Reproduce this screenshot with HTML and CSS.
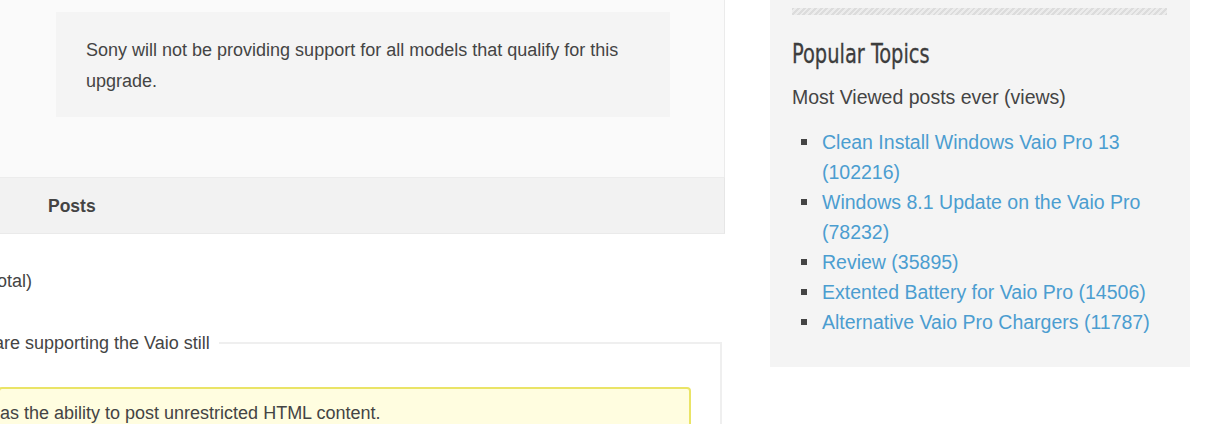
FILE: index.html
```html
<!DOCTYPE html>
<html lang="en">
<head>
<meta charset="utf-8">
<title>Vaio Pro</title>
<link rel="stylesheet" href="styles.css">
</head>
<body>
<div class="page">
  <main class="content">
    <section class="panel">
      <blockquote class="quote">Sony will not be providing support for all models that qualify for this upgrade.</blockquote>
    </section>
    <div class="posts-bar">Posts</div>
    <p class="total">otal)</p>
    <fieldset class="reply">
      <legend class="reply-legend">are supporting the Vaio still</legend>
      <div class="notice">as the ability to post unrestricted HTML content.</div>
    </fieldset>
  </main>
  <aside class="sidebar">
    <div class="stripe"></div>
    <h2 class="side-title">Popular Topics</h2>
    <p class="side-sub">Most Viewed posts ever (views)</p>
    <ul class="topics">
      <li><a href="#">Clean Install Windows Vaio Pro 13 (102216)</a></li>
      <li><a href="#">Windows 8.1 Update on the Vaio Pro (78232)</a></li>
      <li><a href="#">Review (35895)</a></li>
      <li><a href="#">Extented Battery for Vaio Pro (14506)</a></li>
      <li><a href="#">Alternative Vaio Pro Chargers (11787)</a></li>
    </ul>
  </aside>
</div>
</body>
</html>
```
FILE: styles.css
```css
html, body {
  margin: 0;
  padding: 0;
  background: #ffffff;
  overflow: hidden;
}
body {
  font-family: "Liberation Sans", Arial, sans-serif;
  color: #444444;
  font-size: 18px;
}
.page {
  display: flex;
  align-items: flex-start;
  width: 1215px;
  height: 424px;
}
.content {
  width: 725px;
  flex: none;
}
.panel {
  background: #fafafa;
  border-right: 1px solid #ebebeb;
  padding: 12px 0 60px 56px;
}
.quote {
  margin: 0;
  width: 584px;
  padding: 23px 0 20px 30px;
  background: #f4f4f4;
  line-height: 31px;
  color: #444;
}
.posts-bar {
  background: #f2f2f2;
  border-top: 1px solid #ececec;
  border-bottom: 1px solid #eaeaea;
  border-right: 1px solid #e6e6e6;
  height: 55px;
  line-height: 57px;
  padding-left: 48px;
  font-weight: bold;
  font-size: 17.5px;
  color: #444;
}
.total {
  margin: 35px 0 0 -3px;
  line-height: 24px;
}
.reply {
  margin: 38px 0 0 -8px;
  width: 730px;
  box-sizing: border-box;
  border: 2px solid #efefef;
  padding: 0 0 40px 0;
  min-width: 0;
}
.reply-legend {
  padding: 0 9px 0 0;
  line-height: 24px;
}
.notice {
  margin: 32px 29px 0 4px;
  padding: 12px 0 18px 0;
  background: #fffde0;
  border: 2px solid #eae466;
  border-radius: 4px;
  line-height: 24px;
  color: #444;
}
.sidebar {
  flex: none;
  margin-left: 45px;
  width: 420px;
  box-sizing: border-box;
  background: #f4f4f4;
  padding: 8px 23px 30px 22px;
}
.stripe {
  height: 7px;
  background: repeating-linear-gradient(135deg, #dcdcdc 0 2px, #ececec 2px 4px);
}
.side-title {
  margin: 23px 0 0 0;
  font-family: "DejaVu Sans Condensed", "DejaVu Sans", sans-serif;
  font-weight: normal;
  font-size: 27px;
  line-height: 32px;
  color: #3d3d3d;
  transform: scaleX(0.8);
  transform-origin: left center;
  -webkit-text-stroke: 0.3px #3d3d3d;
}
.side-sub {
  margin: 12px 0 0 0;
  font-size: 19.5px;
  line-height: 30px;
  color: #444;
}
.topics {
  list-style: none;
  margin: 15px 0 0 0;
  padding: 0;
  font-size: 19.5px;
  line-height: 30px;
}
.topics li {
  display: flex;
  align-items: flex-start;
  gap: 15px;
}
.topics li::before {
  content: "";
  flex: none;
  width: 6px;
  height: 6px;
  margin: 12px 0 0 9px;
  background: #444;
}
.topics a {
  color: #4b9dd0;
  text-decoration: none;
}
```
